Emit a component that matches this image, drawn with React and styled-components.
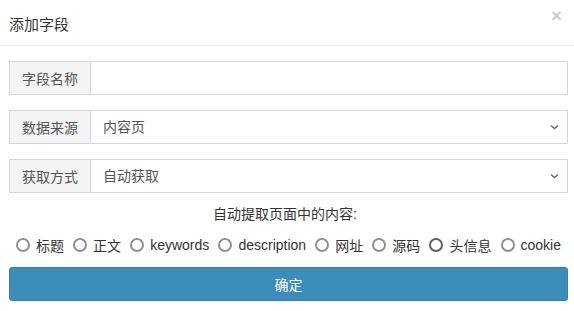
import React from "react"
import styled, { createGlobalStyle } from "styled-components"

const Global = createGlobalStyle`
  * { box-sizing: border-box; }
  body {
    margin: 0;
    background: #fff;
    font-family: "Liberation Sans", Arial, "Noto Sans CJK SC", sans-serif;
    font-size: 14px;
    color: #333;
  }
`
const Header = styled.div`
  display: flex;
  align-items: center;
  justify-content: space-between;
  height: 46px;
  padding: 0 9px 0 9px;
  border-bottom: 1px solid #eeeeee;
`
const Title = styled.h4`
  margin: 0;
  font-size: 15px;
  font-weight: normal;
  color: #333;
  padding-top: 2px;
`
const Close = styled.span`
  font-size: 19px;
  font-weight: bold;
  color: #000;
  opacity: 0.2;
  line-height: 1;
  margin-top: -14px;
  margin-right: 3px;
`
const Body = styled.div`
  display: flex;
  flex-direction: column;
  padding: 15px 6px 0 9px;
`
const Group = styled.div`
  display: flex;
  height: 34px;
  margin-bottom: 15px;
`
const Addon = styled.span`
  display: flex;
  align-items: center;
  justify-content: center;
  width: 81px;
  flex-shrink: 0;
  background: #f4f4f4;
  border: 1px solid #d2d6de;
  border-right: 0;
  color: #555;
  font-size: 14px;
`
const Input = styled.input`
  flex: 1;
  border: 1px solid #d2d6de;
  padding: 0 12px;
  font: inherit;
  outline: none;
`
const Select = styled.select`
  flex: 1;
  appearance: none;
  border: 1px solid #d2d6de;
  padding: 0 12px;
  font: inherit;
  color: #555;
  background: #fff url("data:image/svg+xml,%3Csvg xmlns='http://www.w3.org/2000/svg' width='9' height='6'%3E%3Cpath d='M1 1.5l3.5 3 3.5-3' fill='none' stroke='%23666' stroke-width='1.4'/%3E%3C/svg%3E") no-repeat right 8px center;
  outline: none;
`
const Hint = styled.div`
  text-align: center;
  margin: -4px 7px 0 0;
  line-height: 20px;
  color: #333;
`
const Options = styled.div`
  display: flex;
  justify-content: space-between;
  align-items: center;
  padding: 10px 7px 0 7px;
  height: 32px;
`
const Opt = styled.label`
  display: flex;
  align-items: center;
  gap: 6px;
  color: #333;
`
const Radio = styled.span`
  width: 14px;
  height: 14px;
  border-radius: 50%;
  border: 2px solid ${p => (p.$hover ? "#5f5f6b" : "#8f8f9d")};
`
const Button = styled.button`
  margin-top: 11px;
  height: 34px;
  border: 1px solid #367fa9;
  border-radius: 3px;
  background: #3c8dbc;
  color: #fff;
  font: inherit;
`

const opts = ["标题", "正文", "keywords", "description", "网址", "源码", "头信息", "cookie"]

export default function App() {
  return (
    <>
      <Global />
      <Header>
        <Title>添加字段</Title>
        <Close>×</Close>
      </Header>
      <Body>
        <Group>
          <Addon>字段名称</Addon>
          <Input />
        </Group>
        <Group>
          <Addon>数据来源</Addon>
          <Select defaultValue="内容页">
            <option>内容页</option>
          </Select>
        </Group>
        <Group>
          <Addon>获取方式</Addon>
          <Select defaultValue="自动获取">
            <option>自动获取</option>
          </Select>
        </Group>
        <Hint>自动提取页面中的内容:</Hint>
        <Options>
          {opts.map(o => (
            <Opt key={o}>
              <Radio $hover={o === "头信息"} />
              {o}
            </Opt>
          ))}
        </Options>
        <Button>确定</Button>
      </Body>
    </>
  )
}
